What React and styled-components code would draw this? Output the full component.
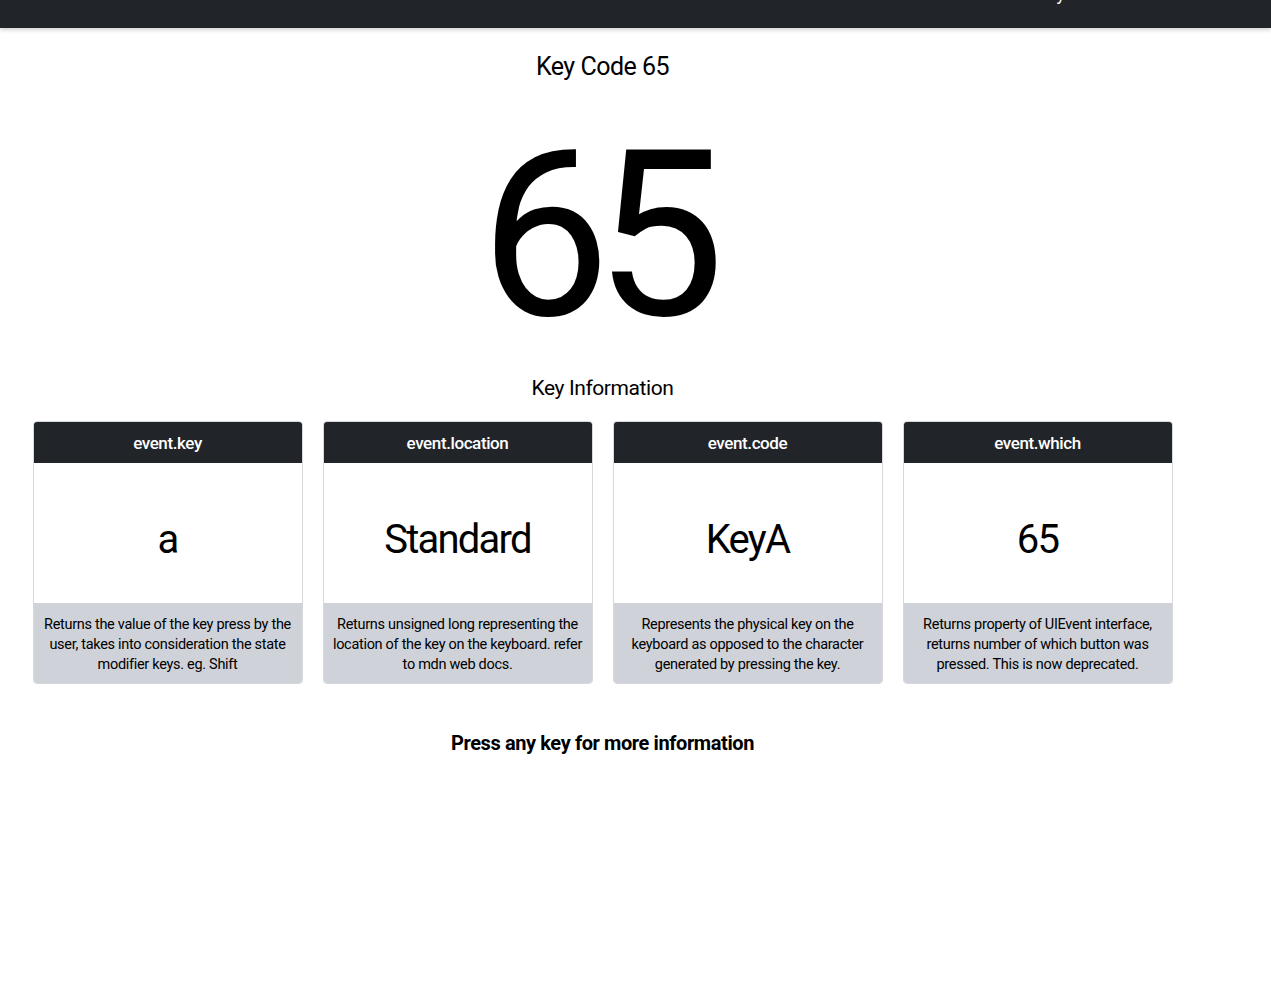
import styled, { createGlobalStyle } from 'styled-components';

const GlobalStyle = createGlobalStyle`
  body {
    margin: 0;
    background: #fff;
    color: #000;
    font-family: "Roboto", "Liberation Sans", sans-serif;
  }
`;

const NavBar = styled.nav`
  height: 28px;
  background: #212529;
  box-shadow: 0 2px 4px rgba(0, 0, 0, 0.18);
  display: flex;
  justify-content: flex-end;
  overflow: hidden;
  padding-right: 206px;
`;

const NavText = styled.span`
  color: #fff;
  font-size: 18px;
  line-height: 18px;
  margin-top: -15px;
`;

const Main = styled.main`
  width: 1205px;
  display: flex;
  flex-direction: column;
  align-items: center;
`;

const Title = styled.h3`
  margin: 22px 0 0;
  font-size: 25px;
  font-weight: 400;
  line-height: 34px;
  letter-spacing: -0.5px;
`;

const BigCode = styled.div`
  margin-top: 27px;
  font-size: 232px;
  line-height: 250px;
  font-weight: 400;
  letter-spacing: -16px;
  padding-right: 16px;
`;

const SubTitle = styled.h4`
  margin: 14px 0 0;
  font-size: 21px;
  font-weight: 400;
  line-height: 26px;
  letter-spacing: -0.4px;
`;

const CardRow = styled.div`
  margin-top: 20px;
  display: grid;
  grid-template-columns: repeat(4, 270px);
  gap: 20px;
`;

const Card = styled.div`
  border: 1px solid #d6d8dc;
  border-radius: 4px;
  overflow: hidden;
  display: flex;
  flex-direction: column;
`;

const CardHeader = styled.div`
  height: 41px;
  background: #212529;
  color: #fff;
  font-size: 17px;
  font-weight: 500;
  letter-spacing: -0.4px;
  display: flex;
  align-items: center;
  justify-content: center;
`;

const CardValue = styled.div`
  height: 140px;
  box-sizing: border-box;
  padding-top: 12px;
  display: flex;
  align-items: center;
  justify-content: center;
  font-size: 40px;
  letter-spacing: -1.8px;
`;

const CardFooter = styled.div`
  height: 80px;
  box-sizing: border-box;
  background: #cfd2d9;
  padding: 12px 8px 0;
  font-size: 14.5px;
  line-height: 20px;
  letter-spacing: -0.3px;
  text-align: center;
`;

const Hint = styled.p`
  margin: 47px 0 0;
  font-size: 20px;
  font-weight: 700;
  letter-spacing: -0.4px;
`;

const cards = [
  {
    title: 'event.key',
    value: 'a',
    text: 'Returns the value of the key press by the user, takes into consideration the state modifier keys. eg. Shift',
  },
  {
    title: 'event.location',
    value: 'Standard',
    text: 'Returns unsigned long representing the location of the key on the keyboard. refer to mdn web docs.',
  },
  {
    title: 'event.code',
    value: 'KeyA',
    text: 'Represents the physical key on the keyboard as opposed to the character generated by pressing the key.',
  },
  {
    title: 'event.which',
    value: '65',
    text: 'Returns property of UIEvent interface, returns number of which button was pressed. This is now deprecated.',
  },
];

const App = () => (
  <>
    <GlobalStyle />
    <NavBar>
      <NavText>y</NavText>
    </NavBar>
    <Main>
      <Title>Key Code 65</Title>
      <BigCode>65</BigCode>
      <SubTitle>Key Information</SubTitle>
      <CardRow>
        {cards.map((c) => (
          <Card key={c.title}>
            <CardHeader>{c.title}</CardHeader>
            <CardValue>{c.value}</CardValue>
            <CardFooter>{c.text}</CardFooter>
          </Card>
        ))}
      </CardRow>
      <Hint>Press any key for more information</Hint>
    </Main>
  </>
);

export default App;
